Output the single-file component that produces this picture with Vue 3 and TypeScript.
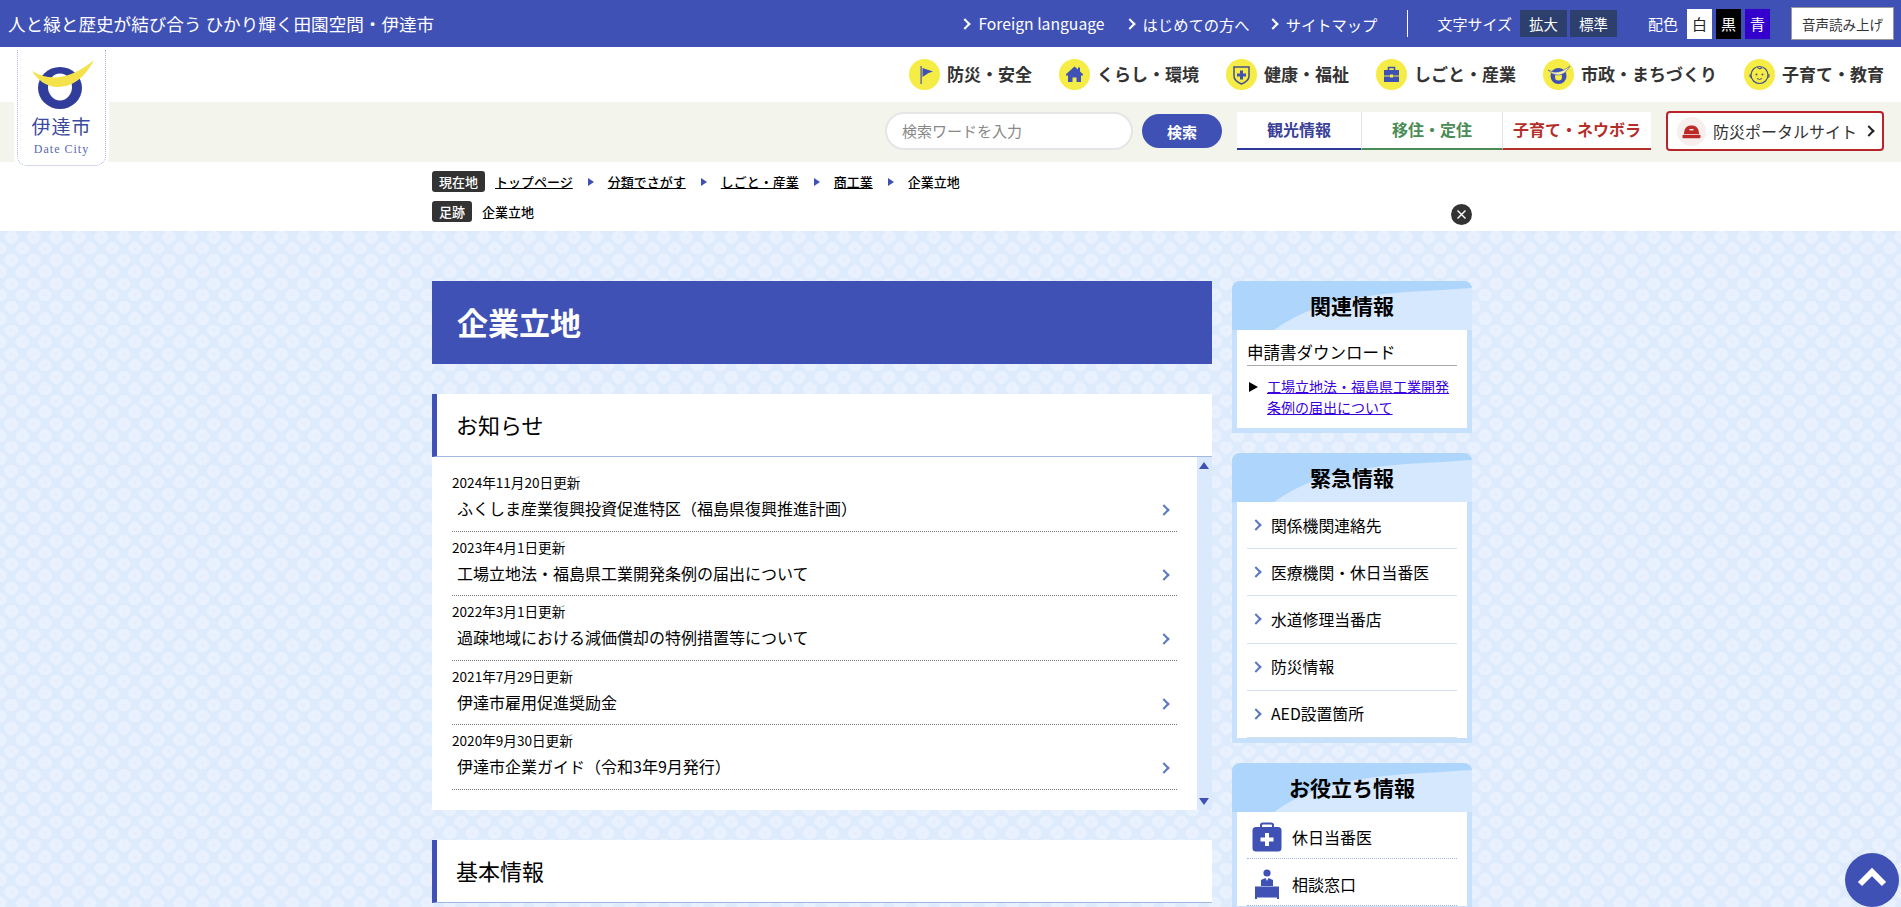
<template>
  <div class="page">
    <div class="topbar">
      <p class="catch">人と緑と歴史が結び合う ひかり輝く田園空間・伊達市</p>
      <ul class="toplinks">
        <li v-for="l in topLinks" :key="l"><span class="chev white"></span>{{ l }}</li>
      </ul>
      <span class="divider"></span>
      <span class="toplabel size-label">文字サイズ</span>
      <button class="sizebtn">拡大</button>
      <button class="sizebtn">標準</button>
      <span class="toplabel color-label">配色</span>
      <button class="colorbtn c-white">白</button>
      <button class="colorbtn c-black">黒</button>
      <button class="colorbtn c-blue">青</button>
      <button class="voice">音声読み上げ</button>
    </div>

    <header class="head">
      <nav class="gnav">
        <a v-for="n in navItems" :key="n.label" class="gnav-item">
          <svg class="gnav-icon" viewBox="0 0 31 31">
            <circle cx="15.5" cy="15.5" r="15.5" fill="#f5ec45" />
            <template v-if="n.icon === 'flag'">
              <rect x="11.5" y="7" width="1.2" height="18" fill="#3f51b5" />
              <path d="M13.5 9 L24 12.5 L19.5 14 L13.5 18Z" fill="#3f51b5" />
            </template>
            <template v-else-if="n.icon === 'home'">
              <path d="M15.5 7.5 L19 10.6 V8.5 H21 V12.4 L24 15.2 V16.5 H22 V23 H17.5 V18.5 H13.5 V23 H9 V16.5 H7 V15.2Z" fill="#3f51b5" />
            </template>
            <template v-else-if="n.icon === 'shield'">
              <path d="M8 8 H23 V17 C23 21 19 23.5 15.5 25 C12 23.5 8 21 8 17Z" fill="#f5ec45" stroke="#46508c" stroke-width="1.5" />
              <path d="M14 11.5 H17 V14.5 H20 V17.5 H17 V20.5 H14 V17.5 H11 V14.5 H14Z" fill="#3f51b5" />
            </template>
            <template v-else-if="n.icon === 'bag'">
              <path d="M12.5 11 V8.5 H18.5 V11" fill="none" stroke="#3f51b5" stroke-width="1.6" />
              <rect x="8" y="11" width="15" height="5.5" fill="#3f51b5" />
              <rect x="8" y="17.5" width="15" height="5.5" fill="#3f51b5" />
              <rect x="14" y="15.5" width="3" height="3" fill="#f5ec45" />
            </template>
            <template v-else-if="n.icon === 'city'">
              <ellipse cx="15.5" cy="17" rx="8" ry="8" fill="#3f51b5" />
              <ellipse cx="15.5" cy="18" rx="3.5" ry="3.5" fill="#f5ec45" />
              <path d="M5 11 Q15 17 27 7 Q22 16 15 16 Q9 16 5 11Z" fill="#fff7a8" stroke="#3f51b5" stroke-width=".6" />
            </template>
            <template v-else>
              <circle cx="15.5" cy="16" r="8.5" fill="none" stroke="#46508c" stroke-width="1.2" />
              <path d="M6.5 15 Q5 17 7 18.5 M24.5 15 Q26 17 24 18.5 M13 8 Q15.5 11 18 8.5" fill="none" stroke="#46508c" stroke-width="1.1" />
              <circle cx="12.5" cy="15.5" r="1" fill="#46508c" />
              <circle cx="18.5" cy="15.5" r="1" fill="#46508c" />
              <path d="M13 19.5 Q15.5 21.5 18 19.5" fill="none" stroke="#46508c" stroke-width="1" />
            </template>
          </svg>
          <span>{{ n.label }}</span>
        </a>
      </nav>

      <div class="band">
        <input class="search" type="text" placeholder="検索ワードを入力" />
        <button class="searchbtn">検索</button>
        <div class="tabs">
          <a v-for="t in tabs" :key="t.label" class="tab" :class="t.cls">{{ t.label }}</a>
        </div>
        <a class="portal">
          <svg class="portal-icon" viewBox="0 0 29 29">
            <circle cx="14.5" cy="14.5" r="14.5" fill="#f7eeee" />
            <path d="M7 17 C7 11 10 8.5 14.5 8.5 C19 8.5 22 11 22 17Z" fill="#bb2a28" />
            <rect x="5.5" y="17.8" width="18" height="3.4" rx="1" fill="#bb2a28" />
            <rect x="12.5" y="12" width="4" height="1.4" fill="#f7eeee" />
          </svg>
          <span class="portal-text">防災ポータルサイト</span>
          <span class="chev dark"></span>
        </a>
      </div>

      <a class="logo">
        <svg class="logo-mark" viewBox="28 58 70 54">
          <ellipse cx="60" cy="88" rx="22" ry="21" fill="#313d9a" />
          <ellipse cx="60" cy="87" rx="12" ry="13.5" fill="#fff" />
          <path d="M32 71 Q60 88 94 60 C85 78 72 87 58 87 C46 87 38 80 32 71Z" fill="#f5e24a" />
        </svg>
        <span class="logo-ja">伊達市</span>
        <span class="logo-en">Date City</span>
      </a>
    </header>

    <div class="crumbs">
      <div class="crumb-row">
        <span class="crumb-label">現在地</span>
        <template v-for="(c, i) in crumbs" :key="c">
          <span v-if="i" class="crumb-arrow"></span>
          <a class="crumb" :class="{ current: i === crumbs.length - 1 }">{{ c }}</a>
        </template>
      </div>
      <div class="crumb-row second">
        <span class="crumb-label">足跡</span>
        <span class="crumb current trace">企業立地</span>
      </div>
      <button class="close" aria-label="閉じる">
        <svg viewBox="0 0 21 21"><path d="M6.5 6.5 L14.5 14.5 M14.5 6.5 L6.5 14.5" stroke="#fff" stroke-width="1.4" /></svg>
      </button>
    </div>

    <div class="pattern">
      <div class="columns">
        <main class="main">
          <h1 class="title">企業立地</h1>

          <section class="panel">
            <h2 class="panel-head">お知らせ</h2>
            <div class="news">
              <ul class="news-list">
                <li v-for="r in news" :key="r.title" class="news-row">
                  <p class="news-date">{{ r.date }}</p>
                  <p class="news-title">{{ r.title }}</p>
                  <span class="chev blue news-chev"></span>
                </li>
              </ul>
              <div class="scroll">
                <span class="tri up"></span>
                <span class="tri down"></span>
              </div>
            </div>
          </section>

          <section class="panel basic">
            <h2 class="panel-head">基本情報</h2>
          </section>
        </main>

        <aside class="side">
          <section class="box">
            <div class="box-head">
              <svg class="swoosh" viewBox="0 0 240 49" preserveAspectRatio="none">
                <path d="M0 0 H240 V7 C170 12 95 10 42 49 H0Z" fill="#aed5fb" />
              </svg>
              <h2>関連情報</h2>
            </div>
            <div class="box-body related">
              <h3>申請書ダウンロード</h3>
              <div class="dl">
                <span class="dl-tri"></span>
                <a href="#">工場立地法・福島県工業開発条例の届出について</a>
              </div>
            </div>
          </section>

          <section class="box">
            <div class="box-head">
              <svg class="swoosh" viewBox="0 0 240 49" preserveAspectRatio="none">
                <path d="M0 0 H240 V7 C170 12 95 10 42 49 H0Z" fill="#aed5fb" />
              </svg>
              <h2>緊急情報</h2>
            </div>
            <ul class="box-body emergency">
              <li v-for="e in emergency" :key="e"><span class="chev blue"></span>{{ e }}</li>
            </ul>
          </section>

          <section class="box">
            <div class="box-head">
              <svg class="swoosh" viewBox="0 0 240 49" preserveAspectRatio="none">
                <path d="M0 0 H240 V7 C170 12 95 10 42 49 H0Z" fill="#aed5fb" />
              </svg>
              <h2>お役立ち情報</h2>
            </div>
            <ul class="box-body useful">
              <li>
                <svg class="use-icon" viewBox="0 0 30 30">
                  <path d="M9 6 V3 Q9 1.5 11 1.5 H19 Q21 1.5 21 3 V6" fill="none" stroke="#3f51b5" stroke-width="2" />
                  <rect x="0.5" y="5" width="29" height="24.5" rx="3.5" fill="#3f51b5" />
                  <path d="M13 11 H17 V15.5 H21.5 V19.5 H17 V24 H13 V19.5 H8.5 V15.5 H13Z" fill="#fff" />
                </svg>
                休日当番医
              </li>
              <li>
                <svg class="use-icon" viewBox="0 0 30 30">
                  <circle cx="15" cy="4" r="3.6" fill="#3f51b5" />
                  <path d="M9 17 V11 L13.5 9 L15 12 L16.5 9 L21 11 V17Z" fill="#3f51b5" />
                  <rect x="3" y="17.5" width="24" height="11" fill="#3f51b5" />
                  <rect x="3" y="28" width="2" height="2" fill="#3f51b5" />
                  <rect x="25" y="28" width="2" height="2" fill="#3f51b5" />
                </svg>
                相談窓口
              </li>
            </ul>
          </section>
        </aside>
      </div>
    </div>

    <a class="totop" aria-label="ページの先頭へ">
      <svg viewBox="0 0 54 54"><path d="M15 31 L27 19 L39 31" fill="none" stroke="#fff" stroke-width="6" /></svg>
    </a>
  </div>
</template>

<script setup lang="ts">
const topLinks = ['Foreign language', 'はじめての方へ', 'サイトマップ']

const navItems = [
  { label: '防災・安全', icon: 'flag' },
  { label: 'くらし・環境', icon: 'home' },
  { label: '健康・福祉', icon: 'shield' },
  { label: 'しごと・産業', icon: 'bag' },
  { label: '市政・まちづくり', icon: 'city' },
  { label: '子育て・教育', icon: 'baby' },
]

const tabs = [
  { label: '観光情報', cls: 'navy' },
  { label: '移住・定住', cls: 'green' },
  { label: '子育て・ネウボラ', cls: 'red' },
]

const crumbs = ['トップページ', '分類でさがす', 'しごと・産業', '商工業', '企業立地']

const news = [
  { date: '2024年11月20日更新', title: 'ふくしま産業復興投資促進特区（福島県復興推進計画）' },
  { date: '2023年4月1日更新', title: '工場立地法・福島県工業開発条例の届出について' },
  { date: '2022年3月1日更新', title: '過疎地域における減価償却の特例措置等について' },
  { date: '2021年7月29日更新', title: '伊達市雇用促進奨励金' },
  { date: '2020年9月30日更新', title: '伊達市企業ガイド（令和3年9月発行）' },
]

const emergency = ['関係機関連絡先', '医療機関・休日当番医', '水道修理当番店', '防災情報', 'AED設置箇所']
</script>

<style>
html,
body {
  margin: 0;
  overflow: hidden;
}
</style>

<style scoped>
* {
  box-sizing: border-box;
}
p, ul, h1, h2, h3 {
  margin: 0;
  padding: 0;
}
ul {
  list-style: none;
}
button {
  font: inherit;
  border: 0;
  padding: 0;
}

.page {
  position: relative;
  height: 907px;
  overflow: hidden;
  background: #fff;
  color: #000;
  font-family: "Noto Sans CJK JP", "Noto Sans", sans-serif;
}

.chev {
  display: inline-block;
  flex: none;
  width: 8px;
  height: 8px;
  border-top: 2px solid currentColor;
  border-right: 2px solid currentColor;
  transform: rotate(45deg);
}
.chev.white { color: #fff; }
.chev.dark { color: #222; }
.chev.blue { color: #5a78c0; }

/* top bar */
.topbar {
  display: flex;
  align-items: center;
  height: 47px;
  padding: 0 7px 0 8px;
  background: #3f51b5;
  color: #fff;
}
.catch {
  font-size: 17.6px;
  margin-right: auto;
}
.toplinks {
  display: flex;
  gap: 19px;
  font-size: 15.3px;
}
.toplinks li {
  display: flex;
  align-items: center;
}
.toplinks li:first-child {
  margin-right: 2px;
  font-size: 15.7px;
}
.toplinks .chev {
  margin-right: 9px;
}
.divider {
  width: 1px;
  height: 27px;
  background: #fff;
  margin: 0 29px 0 30px;
}
.toplabel {
  font-size: 15px;
}
.size-label {
  margin-right: 8px;
}
.sizebtn {
  width: 47px;
  height: 27px;
  margin-right: 3px;
  background: #2d3f6c;
  color: #fff;
  font-size: 14.4px;
}
.color-label {
  margin: 0 9px 0 28px;
}
.colorbtn {
  width: 25px;
  height: 30px;
  margin-right: 4px;
  font-size: 15px;
}
.c-white { background: #fff; color: #222; }
.c-black { background: #000; color: #fff; }
.c-blue { background: #3300cc; color: #fff; }
.voice {
  width: 103px;
  height: 33px;
  margin-left: 17px;
  background: #fff;
  border: 1px solid #999;
  color: #333;
  font-size: 13.5px;
}

/* header */
.head {
  position: relative;
}
.gnav {
  display: flex;
  justify-content: flex-end;
  align-items: center;
  gap: 27px;
  height: 55px;
  padding-right: 17px;
}
.gnav-item {
  display: flex;
  align-items: center;
  gap: 7px;
  color: #333;
  font-size: 17px;
  font-weight: 700;
}
.gnav-item span {
  position: relative;
  top: -1px;
}
.gnav-icon {
  width: 31px;
  height: 31px;
}
.band {
  display: flex;
  align-items: center;
  height: 60px;
  padding: 0 17px 2px 0;
  justify-content: flex-end;
  background: #f3f4eb;
}
.search {
  width: 248px;
  height: 38px;
  padding: 0 15px 2px;
  border: 2px solid #e5e5e5;
  border-radius: 19px;
  background: #fff;
  font: 15px "Noto Sans CJK JP", sans-serif;
}
.search::placeholder {
  color: #888;
}
.searchbtn {
  width: 80px;
  height: 34px;
  margin: 0 15px 0 9px;
  border-radius: 17px;
  background: #3f51b5;
  color: #fff;
  font-size: 15px;
  font-weight: 700;
}
.tabs {
  display: flex;
  height: 38px;
  background: #fff;
}
.tab {
  display: flex;
  align-items: center;
  justify-content: center;
  padding-bottom: 3px;
  border-bottom: 2px solid;
  font-size: 16px;
  font-weight: 700;
}
.tab + .tab {
  border-left: 1px solid #e5e5e5;
}
.navy { width: 124px; color: #3a4199; border-bottom-color: #2e379a; }
.green { width: 141px; color: #4a8c55; border-bottom-color: #4a8c55; }
.red { width: 149px; color: #b52f2a; border-bottom-color: #b52f2a; }
.portal {
  display: flex;
  align-items: center;
  width: 218px;
  height: 40px;
  margin-left: 15px;
  padding-left: 9px;
  border: 2px solid #b8242a;
  border-radius: 4px;
  background: #fff;
  color: #333;
  font-size: 16px;
}
.portal-icon {
  width: 29px;
  height: 29px;
  margin-right: 7px;
}
.portal .chev {
  margin-left: 8px;
}
.logo {
  position: absolute;
  top: 3px;
  left: 17px;
  width: 89px;
  height: 116px;
  display: flex;
  flex-direction: column;
  align-items: center;
  background: #fff;
  border: 1px dotted #a9b3d8;
  border-top: 0;
  border-radius: 0 0 10px 10px;
  box-shadow: 0 0 0 3px #fff;
}
.logo-mark {
  width: 70px;
  height: 54px;
  margin: 8px 0 0 2px;
}
.logo-ja {
  margin-top: 1px;
  color: #3a4a9e;
  font-size: 19px;
  line-height: 26px;
  letter-spacing: 1px;
}
.logo-en {
  margin-top: 1px;
  color: #5b68b0;
  font-family: "Liberation Serif", serif;
  font-size: 12px;
  line-height: 18px;
  letter-spacing: 1px;
}

/* breadcrumb */
.crumbs {
  position: relative;
  width: 1040px;
  height: 69px;
  margin-left: 432px;
  padding-top: 9px;
}
.crumb-row {
  display: flex;
  align-items: center;
  height: 21px;
}
.crumb-row.second {
  margin-top: 9px;
}
.crumb-label {
  padding: 0 7px;
  line-height: 21px;
  border-radius: 3px;
  background: #333;
  color: #fff;
  font-size: 13px;
  font-weight: 500;
}
.crumb {
  margin-left: 10px;
  color: #000;
  font-size: 13px;
  font-weight: 500;
  text-decoration: underline;
}
.crumb.current {
  text-decoration: none;
}
.crumb-arrow {
  margin: 0 4px 0 15px;
  border-left: 6px solid #3f51b5;
  border-top: 4px solid transparent;
  border-bottom: 4px solid transparent;
}
.close {
  position: absolute;
  right: 0;
  top: 42px;
  width: 21px;
  height: 21px;
  border-radius: 50%;
  background: #333;
}
.close svg {
  display: block;
}

/* page body */
.pattern {
  height: 676px;
  padding-top: 50px;
  background-color: #deebfd;
  background-image: url("data:image/svg+xml,%3Csvg xmlns='http://www.w3.org/2000/svg' width='45' height='23.4'%3E%3Cg fill='%23e9f1fe'%3E%3Crect x='5' y='-.4' width='12.5' height='12.5' rx='4.5' transform='rotate(45 11.25 5.85)'/%3E%3Crect x='27.5' y='-.4' width='12.5' height='12.5' rx='4.5' transform='rotate(45 33.75 5.85)'/%3E%3Crect x='-6.25' y='11.3' width='12.5' height='12.5' rx='4.5' transform='rotate(45 0 17.55)'/%3E%3Crect x='16.25' y='11.3' width='12.5' height='12.5' rx='4.5' transform='rotate(45 22.5 17.55)'/%3E%3Crect x='38.75' y='11.3' width='12.5' height='12.5' rx='4.5' transform='rotate(45 45 17.55)'/%3E%3C/g%3E%3Cg fill='%23e3edfd'%3E%3Ccircle cx='11.25' cy='5.85' r='1.3'/%3E%3Ccircle cx='33.75' cy='5.85' r='1.3'/%3E%3Ccircle cx='0' cy='17.55' r='1.3'/%3E%3Ccircle cx='22.5' cy='17.55' r='1.3'/%3E%3Ccircle cx='45' cy='17.55' r='1.3'/%3E%3C/g%3E%3C/svg%3E");
}
.columns {
  display: flex;
  gap: 20px;
  width: 1040px;
  margin-left: 432px;
}
.main {
  width: 780px;
}
.title {
  height: 83px;
  padding-left: 25px;
  background: #3f51b5;
  color: #fff;
  font-size: 31px;
  font-weight: 700;
  line-height: 81px;
}
.panel {
  margin-top: 30px;
}
.panel-head {
  height: 63px;
  padding-left: 19px;
  border-left: 5px solid #3f51b5;
  border-bottom: 1px solid #a3b8e0;
  background: #fff;
  font-size: 22px;
  font-weight: 400;
  line-height: 60px;
}
.news {
  display: flex;
  height: 353px;
  background: #fff;
}
.news-list {
  flex: 1;
  padding: 10px 20px 0;
}
.news-row {
  position: relative;
  height: 64.5px;
  padding-top: 6px;
  border-bottom: 1px dotted #777;
}
.news-date {
  font-size: 13.6px;
  line-height: 19px;
}
.news-title {
  padding-left: 5px;
  font-size: 16px;
  line-height: 32px;
}
.news-chev {
  position: absolute;
  right: 9px;
  top: 39px;
}
.scroll {
  position: relative;
  width: 15px;
  background: #dbe9fd;
}
.tri {
  position: absolute;
  left: 2px;
  border-left: 5.5px solid transparent;
  border-right: 5.5px solid transparent;
}
.up {
  top: 5px;
  border-bottom: 7px solid #3f51b5;
}
.down {
  bottom: 5px;
  border-top: 7px solid #3f51b5;
}

/* sidebar */
.side {
  display: flex;
  flex-direction: column;
  gap: 20px;
  width: 240px;
}
.box {
  border: solid #c7e0fc;
  border-width: 0 5px 5px;
  border-radius: 8px 8px 0 0;
  background: #c7e0fc;
}
.box-head {
  position: relative;
  height: 49px;
  margin: 0 -5px;
  border-radius: 8px 8px 0 0;
  overflow: hidden;
  background: #d6e8fd;
}
.swoosh {
  position: absolute;
  inset: 0;
  width: 100%;
  height: 100%;
}
.box-head h2 {
  position: relative;
  font-size: 21px;
  font-weight: 700;
  line-height: 48px;
  text-align: center;
}
.box-body {
  background: #fff;
}
.related {
  height: 98px;
  padding: 6px 10px 0;
}
.related h3 {
  height: 30px;
  border-bottom: 1px solid #aaa;
  font-size: 16.5px;
  font-weight: 400;
  line-height: 32px;
}
.dl {
  display: flex;
  margin-top: 10px;
  font-size: 14px;
  line-height: 21px;
}
.dl a {
  flex: 1;
  color: #3a00e0;
}
.dl-tri {
  flex: none;
  width: 0;
  height: 0;
  margin: 6px 9px 0 2px;
  border-left: 9px solid #000;
  border-top: 5px solid transparent;
  border-bottom: 5px solid transparent;
}
.emergency {
  height: 236px;
  padding: 0 10px;
  font-size: 15.8px;
}
.emergency li {
  display: flex;
  align-items: center;
  height: 47.2px;
  padding-left: 5px;
  border-bottom: 1px solid #d3e0ec;
}
.emergency .chev {
  margin-right: 11px;
}
.useful {
  padding: 0 10px;
  font-size: 16px;
}
.useful li {
  display: flex;
  align-items: center;
  height: 47px;
  padding-top: 3px;
  border-bottom: 1px dotted #a3b8e0;
}
.use-icon {
  width: 30px;
  height: 30px;
  margin: 0 10px 0 5px;
}

.totop {
  position: absolute;
  right: 2px;
  bottom: 0;
  width: 54px;
  height: 54px;
  border-radius: 50%;
  background: #3f51b5;
}
.totop svg {
  display: block;
}
</style>
